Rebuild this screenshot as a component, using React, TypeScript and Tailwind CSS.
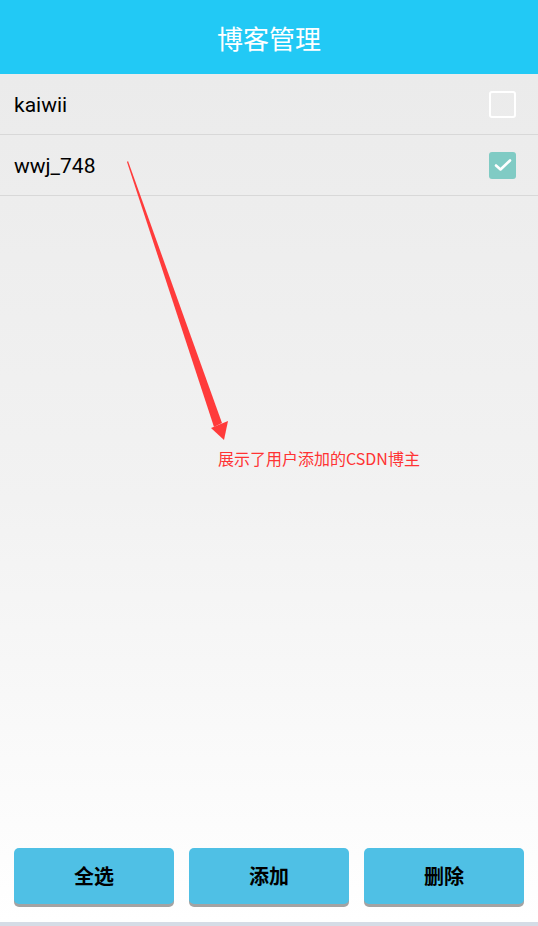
import React from 'react'

const blogs = [
  { name: 'kaiwii', checked: false },
  { name: 'wwj_748', checked: true },
]

const CheckBox = ({ checked }: { checked: boolean }) =>
  checked ? (
    <div className="flex h-[27px] w-[27px] items-center justify-center rounded-[3px] bg-[#80cbc4]">
      <svg width="18" height="14" viewBox="0 0 18 14" fill="none">
        <path d="M2 7.5 L6.5 11.5 L16 2.5" stroke="white" strokeWidth="2.6" strokeLinecap="round" strokeLinejoin="round" />
      </svg>
    </div>
  ) : (
    <div className="h-[27px] w-[27px] rounded-[3px] border-[2.5px] border-white" />
  )

const App = () => {
  return (
    <div
      className="relative flex h-[926px] w-[538px] flex-col overflow-hidden"
      style={{ fontFamily: 'Roboto, "Noto Sans", "Noto Sans CJK SC", sans-serif' }}
    >
      <header className="flex h-[74px] shrink-0 items-center justify-center bg-[#22c9f5]">
        <h1 className="text-[26px] font-normal text-white" style={{ fontFamily: '"Noto Sans CJK SC", sans-serif' }}>
          博客管理
        </h1>
      </header>

      <main className="flex flex-1 flex-col bg-gradient-to-b from-[#ebebeb] via-[#f2f2f2] to-[#ffffff]">
        <ul>
          {blogs.map((b) => (
            <li key={b.name} className="flex h-[61px] items-center justify-between border-b border-[#d8d8d8] pl-[14px] pr-[22px]">
              <span className="pt-[4px] text-[21px] text-black">{b.name}</span>
              <CheckBox checked={b.checked} />
            </li>
          ))}
        </ul>

        <div className="flex-1" />

        <div className="flex gap-[15px] px-[14px] pb-[18px]">
          {['全选', '添加', '删除'].map((t) => (
            <button
              key={t}
              className="h-[56px] w-[160px] rounded-[5px] bg-[#4fc0e5] text-[20px] font-semibold text-black shadow-[0_3px_0_#a3a3a3]"
              style={{ fontFamily: '"Noto Sans CJK SC", sans-serif' }}
            >
              {t}
            </button>
          ))}
        </div>
      </main>
      <div className="h-[4px] shrink-0 bg-[#d5dce6]" />

      {/* annotation arrow */}
      <svg className="pointer-events-none absolute left-0 top-0" width="538" height="926">
        <polygon points="127,162 128,161 222,423 214,427" fill="#ff3b3b" />
        <polygon points="211,428 228,421 224,440" fill="#ff3b3b" />
      </svg>
      <span
        className="absolute left-[218px] top-[448px] text-[16px] leading-[20px] text-[#ff3333]"
        style={{ fontFamily: '"Noto Sans CJK SC", sans-serif' }}
      >
        展示了用户添加的CSDN博主
      </span>
    </div>
  )
}

export default App
